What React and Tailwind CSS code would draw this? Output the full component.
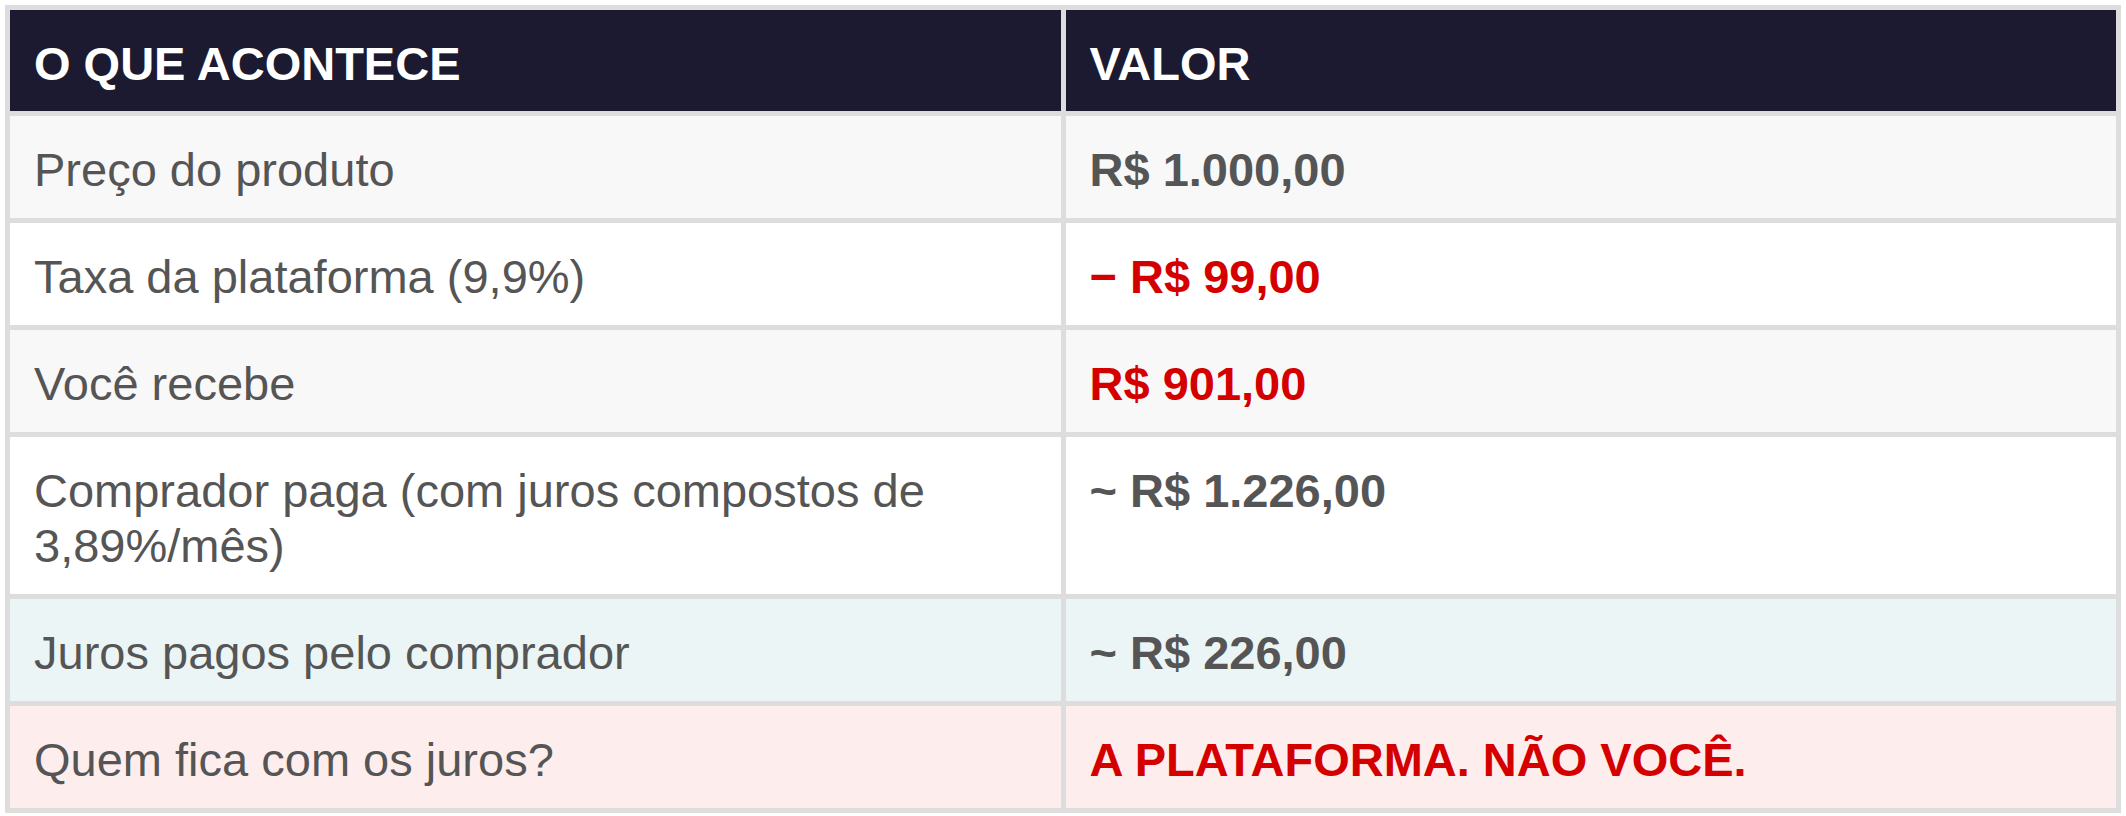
const rows = [
  { label: 'Preço do produto', value: 'R$ 1.000,00', bg: 'bg-[#f8f8f8]', red: false },
  { label: 'Taxa da plataforma (9,9%)', value: '− R$ 99,00', bg: 'bg-white', red: true },
  { label: 'Você recebe', value: 'R$ 901,00', bg: 'bg-[#f8f8f8]', red: true },
  { label: 'Comprador paga (com juros compostos de 3,89%/mês)', value: '~ R$ 1.226,00', bg: 'bg-white', red: false },
  { label: 'Juros pagos pelo comprador', value: '~ R$ 226,00', bg: 'bg-[#ecf5f5]', red: false },
  { label: 'Quem fica com os juros?', value: 'A PLATAFORMA. NÃO VOCÊ.', bg: 'bg-[#fdeded]', red: true },
];

export default function App() {
  return (
    <div className="min-h-screen bg-white pt-[5px] px-[5px] font-['Liberation_Sans',Arial,sans-serif] text-[47px] leading-[55px]">
      <div className="grid grid-cols-2 gap-[5px] bg-[#dddddd] p-[5px]">
        {/* Header */}
        <div className="bg-[#1b1a30] px-[24px] pt-[26px] pb-[20px] font-bold text-white">O QUE ACONTECE</div>
        <div className="bg-[#1b1a30] px-[24px] pt-[26px] pb-[20px] font-bold text-white">VALOR</div>

        {rows.map((row) => (
          <Row key={row.label} {...row} />
        ))}
      </div>
    </div>
  );
}

function Row({ label, value, bg, red }) {
  return (
    <>
      <div className={`${bg} px-[24px] pt-[26px] pb-[21px] text-[#555555]`}>{label}</div>
      <div className={`${bg} px-[24px] pt-[26px] pb-[21px] font-bold ${red ? 'text-[#d40000]' : 'text-[#555555]'}`}>
        {value}
      </div>
    </>
  );
}
